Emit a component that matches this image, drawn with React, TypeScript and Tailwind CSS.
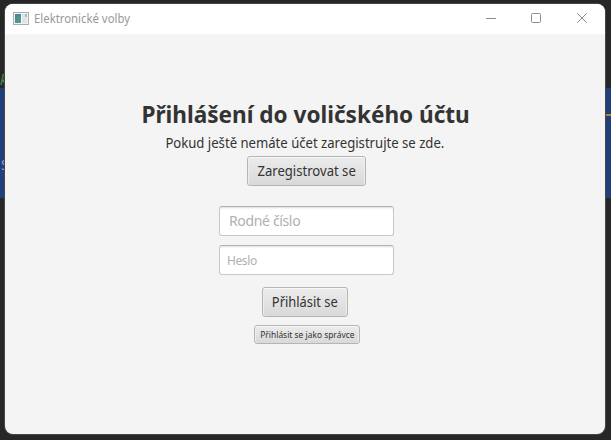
function AppIcon() {
  return (
    <svg width="16" height="14" viewBox="0 0 16 14" shapeRendering="crispEdges">
      <defs>
        <linearGradient id="pane" x1="0" y1="0" x2="0.6" y2="1">
          <stop offset="0" stopColor="#4a7da8" />
          <stop offset="1" stopColor="#4fa083" />
        </linearGradient>
      </defs>
      <rect x="0.5" y="0.5" width="15" height="12" fill="#f1f3f4" stroke="#a9adb4" />
      <rect x="2" y="2" width="6" height="9" fill="url(#pane)" />
      <rect x="8" y="2" width="1" height="9" fill="#fff" />
      <rect x="9" y="2" width="3" height="9" fill="#dfe3e5" />
      <rect x="12" y="2" width="2" height="3" fill="#9fc3c4" />
      <rect x="12" y="5" width="2" height="6" fill="#e4e6e8" />
    </svg>
  );
}

function TitleBar() {
  return (
    <header className="flex h-[30px] shrink-0 items-center bg-white pl-2">
      <AppIcon />
      <span className="ml-[5px] origin-left scale-x-[0.945] text-[12px] leading-4 text-[#999]">Elektronické volby</span>
      <svg className="ml-auto mr-[16px]" width="103" height="12" viewBox="0 0 103 12" fill="none" stroke="#8c8c8c">
        <path d="M0 5.5H10" />
        <rect x="45.5" y="0.5" width="9" height="9" rx="1" />
        <path d="M91.3 0.3L100.7 9.7M100.7 0.3L91.3 9.7" />
      </svg>
    </header>
  );
}

const buttonStyle =
  "flex items-center justify-center whitespace-nowrap rounded-[3px] border border-[#b5b5b5] bg-linear-to-b from-[#ececec] to-[#d9d9d9] text-[#333] shadow-[inset_0_1px_0_#f8f8f8,inset_1px_0_0_#ededed,inset_-1px_0_0_#ededed]";
const fieldStyle =
  "block h-[30px] w-[175px] rounded-[3px] border border-[#c8c8c8] border-t-[#b3b3b3] bg-white shadow-[inset_0_2px_2px_-1px_#ddd] outline-none placeholder:text-[#b0b0b0] placeholder:opacity-100";

export default function App() {
  return (
    <div className="relative h-[440px] w-[611px] overflow-hidden bg-[#272727] font-['Noto_Sans','Open_Sans',sans-serif]">
      <div className="flex h-full flex-col">
        <div className="flex h-[88px] items-end text-[14px] italic leading-4 text-[#4d8e45]">
          <span>k</span>
        </div>
        <div className="flex h-[110px] flex-col bg-[#213f7a]">
          <div className="ml-auto mt-[26px] h-[2px] w-[6px] bg-[#b58a1b]" />
          <span className="mt-[41px] pl-[1px] text-[14px] leading-4 text-[#8fa5c4]">S</span>
        </div>
      </div>

      <div className="absolute left-[5px] top-1 flex h-[430px] w-[600px] flex-col overflow-hidden rounded-[8px] bg-[#f4f4f4] shadow-[0_0_0_1px_#444746]">
        <TitleBar />
        <main className="flex flex-1 flex-col items-center pt-[63px]">
          <h1 className="ml-px scale-x-[0.94] whitespace-nowrap text-[24px] font-bold leading-[34px] text-[#333]">
            Přihlášení do voličského účtu
          </h1>
          <p className="mt-[2px] scale-x-[0.937] whitespace-nowrap text-[14px] leading-5 text-[#333]">
            Pokud ještě nemáte účet zaregistrujte se zde.
          </p>
          <button className={`${buttonStyle} ml-[3px] mt-[3px] h-[30px] w-[119px] pb-[2px] text-[14px]`}>
            <span className="scale-x-[0.935]">Zaregistrovat se</span>
          </button>
          <input className={`${fieldStyle} ml-[3px] mt-5 pb-[2px] pl-[9px] text-[14px] tracking-[-0.35px]`} placeholder="Rodné číslo" />
          <input className={`${fieldStyle} ml-[3px] mt-[9px] pl-[7px] text-[12px] tracking-[-0.4px]`} placeholder="Heslo" type="password" />
          <button className={`${buttonStyle} mt-3 h-[30px] w-[86px] pb-[2px] text-[14px]`}>
            <span className="scale-x-[0.92]">Přihlásit se</span>
          </button>
          <button className={`${buttonStyle} ml-1 mt-2 h-[19px] w-[106px] text-[9px]`}>
            <span className="scale-x-[0.935]">Přihlásit se jako správce</span>
          </button>
        </main>
      </div>
    </div>
  );
}
